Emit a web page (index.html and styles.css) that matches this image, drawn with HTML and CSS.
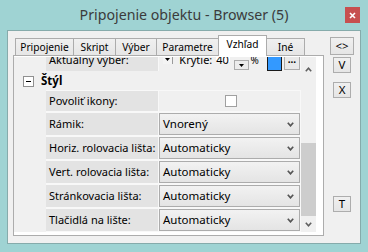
FILE: index.html
```html
<!DOCTYPE html>
<html>
<head>
<meta charset="utf-8">
<link rel="stylesheet" href="styles.css">
</head>
<body>
<div class="window">
  <div class="titlebar">
    <div class="title">Pripojenie objektu - Browser (5)</div>
    <div class="close"><svg width="7" height="7" viewBox="0 0 7 7"><path d="M1 1L6 6M6 1L1 6" stroke="#fff" stroke-width="1.6"/></svg></div>
  </div>
  <div class="client">
    <div class="main">
      <div class="tabstrip">
        <div class="tab t1">Pripojenie</div>
        <div class="tab t2">Skript</div>
        <div class="tab t3">Výber</div>
        <div class="tab t4">Parametre</div>
        <div class="tab t5 active">Vzhľad</div>
        <div class="tab t6">Iné</div>
      </div>
      <div class="panel">
        <div class="grid">
          <div class="rows">
            <div class="row akt">
              <div class="label">Aktuálny výber:</div>
              <div class="value aktval">
                <span class="ddbox"><svg width="5" height="3" viewBox="0 0 5 3"><path d="M0 0H5L2.5 3Z" fill="#000"/></svg></span>
                <span class="krytie">Krytie:</span>
                <span class="num">40</span>
                <span class="spin"><svg width="5" height="3" viewBox="0 0 5 3"><path d="M0 0H5L2.5 3Z" fill="#000"/></svg></span>
                <span class="pct">%</span>
                <span class="color"></span>
                <span class="dots">...</span>
              </div>
            </div>
            <div class="cat">
              <span class="minus"><svg width="5" height="1" viewBox="0 0 5 1"><rect width="5" height="1" fill="#000"/></svg></span>
              <span class="catname">Štýl</span>
            </div>
            <div class="row chk">
              <div class="label">Povoliť ikony:</div>
              <div class="value plain"><span class="checkbox"></span></div>
            </div>
            <div class="row">
              <div class="label">Rámik:</div>
              <div class="value combo"><span>Vnorený</span><svg class="chev" width="7" height="5" viewBox="0 0 7 5"><path d="M0.8 0.8L3.5 3.8L6.2 0.8" fill="none" stroke="#555" stroke-width="1.7"/></svg></div>
            </div>
            <div class="row">
              <div class="label">Horiz. rolovacia lišta:</div>
              <div class="value combo"><span>Automaticky</span><svg class="chev" width="7" height="5" viewBox="0 0 7 5"><path d="M0.8 0.8L3.5 3.8L6.2 0.8" fill="none" stroke="#555" stroke-width="1.7"/></svg></div>
            </div>
            <div class="row">
              <div class="label">Vert. rolovacia lišta:</div>
              <div class="value combo"><span>Automaticky</span><svg class="chev" width="7" height="5" viewBox="0 0 7 5"><path d="M0.8 0.8L3.5 3.8L6.2 0.8" fill="none" stroke="#555" stroke-width="1.7"/></svg></div>
            </div>
            <div class="row">
              <div class="label">Stránkovacia lišta:</div>
              <div class="value combo"><span>Automaticky</span><svg class="chev" width="7" height="5" viewBox="0 0 7 5"><path d="M0.8 0.8L3.5 3.8L6.2 0.8" fill="none" stroke="#555" stroke-width="1.7"/></svg></div>
            </div>
            <div class="row">
              <div class="label">Tlačidlá na lište:</div>
              <div class="value combo"><span>Automaticky</span><svg class="chev" width="7" height="5" viewBox="0 0 7 5"><path d="M0.8 0.8L3.5 3.8L6.2 0.8" fill="none" stroke="#555" stroke-width="1.7"/></svg></div>
            </div>
          </div>
          <div class="vscroll">
            <div class="sbtn up"><svg width="7" height="5" viewBox="0 0 7 5"><path d="M0.8 4.2L3.5 1.2L6.2 4.2" fill="none" stroke="#606060" stroke-width="1.6"/></svg></div>
            <div class="track"></div>
            <div class="thumb"></div>
            <div class="sbtn down"><svg width="7" height="5" viewBox="0 0 7 5"><path d="M0.8 0.8L3.5 3.8L6.2 0.8" fill="none" stroke="#606060" stroke-width="1.6"/></svg></div>
          </div>
        </div>
      </div>
    </div>
    <div class="side">
      <div class="btn b-lr">&lt;&gt;</div>
      <div class="btn b-v">V</div>
      <div class="btn b-x">X</div>
      <div class="btn b-t">T</div>
    </div>
  </div>
</div>
</body>
</html>
```
FILE: styles.css
```css
* { box-sizing: border-box; }
body {
  margin: 0;
  width: 368px;
  height: 252px;
  overflow: hidden;
  background: #9fd3d3;
  font-family: "Noto Sans", "Open Sans", sans-serif;
  font-size: 11.5px;
  color: #000;
}
.window { width: 368px; height: 252px; display: flex; flex-direction: column; }
.titlebar {
  height: 30px;
  display: grid;
  grid-template-columns: 1fr auto 1fr;
}
.title {
  grid-column: 2;
  font-size: 14.2px;
  line-height: 30px;
  color: #3b3b3b;
  white-space: nowrap;
}
.close {
  grid-column: 3;
  justify-self: end;
  margin-top: 7px;
  margin-right: 8px;
  width: 15px;
  height: 16px;
  background: #c75050;
  display: flex;
  align-items: center;
  justify-content: center;
}
.client {
  margin: 0 7px;
  height: 214px;
  border: 1px solid #86abab;
  background: #f0f0f0;
  display: flex;
}
.main {
  margin-left: 5px;
  width: 311px;
  display: flex;
  flex-direction: column;
}
.tabstrip {
  height: 24px;
  display: flex;
  align-items: flex-end;
  padding-left: 2px;
}
.tab {
  height: 17px;
  border: 1px solid #acacac;
  border-bottom: none;
  background: linear-gradient(#f0f0f0, #e6e6e6);
  margin-right: -1px;
  text-align: center;
  font-size: 10.2px;
  line-height: 16px;
  white-space: nowrap;
}
.tab.active {
  height: 21px;
  margin-bottom: -1px;
  background: #fff;
  position: relative;
  z-index: 1;
  line-height: 17px;
}
.t1 { width: 59px; }
.t2 { width: 43px; }
.t3 { width: 42px; }
.t4 { width: 63px; }
.t5 { width: 49px; }
.t6 { width: 39px; }
.panel {
  width: 311px;
  height: 181px;
  border: 1px solid #acacac;
  background: #fff;
  padding: 1px 7px 3px 0;
}
.grid { display: flex; height: 175px; }
.rows {
  width: 287px;
  height: 175px;
  overflow: hidden;
  background: linear-gradient(to right, #f0f0f0 32px, #f8f8f8 32px);
}
.row {
  display: flex;
  height: 22px;
  padding-left: 32px;
  margin-bottom: 2px;
}
.row.akt { margin-top: -8px; margin-bottom: 0; }
.row.chk { height: 20px; }
.label {
  width: 112px;
  margin-right: 1px;
  background: #e3e3e3;
  padding-left: 3px;
  font-size: 11px;
  line-height: 22px;
  white-space: nowrap;
  overflow: hidden;
}
.row.chk .label { line-height: 20px; }
.value { width: 141px; }
.plain {
  background: #f0f0f0;
  display: flex;
  align-items: center;
  justify-content: center;
}
.checkbox {
  width: 12px;
  height: 12px;
  background: #fff;
  border: 1px solid #a0a0a0;
  margin-left: 2px;
}
.combo {
  border: 1px solid #acacac;
  background: linear-gradient(#f2f2f2, #e4e4e4);
  display: flex;
  align-items: center;
  justify-content: space-between;
  padding: 0 5px 0 3px;
  line-height: 20px;
}
.cat {
  height: 19px;
  margin-bottom: 1px;
  background: #f0f0f0;
  display: flex;
  align-items: center;
}
.minus {
  width: 11px;
  height: 11px;
  margin-left: 9px;
  margin-top: 2px;
  border: 1px solid #909090;
  background: #fff;
  display: flex;
  align-items: center;
  justify-content: center;
}
.catname {
  font-weight: bold;
  margin-left: 7px;
}
.aktval {
  display: flex;
  align-items: flex-end;
  background: #f0f0f0;
  font-size: 11px;
  line-height: 22px;
}
.ddbox {
  align-self: flex-start;
  margin-top: 1px;
  margin-left: 4px;
  width: 11px;
  height: 14px;
  background: #f4f4f4;
  border-right: 1px solid #9a9a9a;
  display: flex;
  align-items: flex-end;
  justify-content: center;
  padding-bottom: 3px;
}
.krytie { margin-left: 6px; }
.num {
  margin-left: 4px;
  width: 15px;
  background: linear-gradient(#fff 13px, transparent 13px);
}
.spin {
  margin-left: 4px;
  margin-bottom: 1px;
  width: 15px;
  height: 10px;
  border: 1px solid #acacac;
  background: #ececec;
  display: flex;
  align-items: center;
  justify-content: center;
}
.pct { margin-left: 2px; font-size: 10px; }
.color {
  margin-left: 8px;
  width: 16px;
  height: 19px;
  background: #3399ff;
  border: 1px solid #1a1a1a;
}
.dots {
  margin-left: 2px;
  margin-bottom: 1px;
  width: 17px;
  height: 18px;
  border: 1px solid #acacac;
  background: #e9e9e9;
  line-height: 12px;
  text-align: center;
  font-weight: bold;
  font-size: 10px;
}
.vscroll {
  width: 15px;
  display: flex;
  flex-direction: column;
  background: #f0f0f0;
}
.sbtn { display: flex; align-items: center; justify-content: center; }
.sbtn.up { height: 24px; }
.sbtn.down { height: 16px; }
.track { height: 62px; }
.thumb { height: 73px; background: #cdcdcd; }
.side {
  width: 36px;
  display: flex;
  flex-direction: column;
  align-items: center;
}
.btn {
  border: 1px solid #adadad;
  background: linear-gradient(#f0f0f0, #e5e5e5);
  width: 18px;
  height: 16px;
  text-align: center;
  line-height: 14px;
  font-size: 11.5px;
}
.b-lr { width: 24px; height: 18px; line-height: 16px; margin-top: 6px; }
.b-v { margin-top: 2px; }
.b-x { margin-top: 9px; }
.b-t { margin-top: 98px; }
```
